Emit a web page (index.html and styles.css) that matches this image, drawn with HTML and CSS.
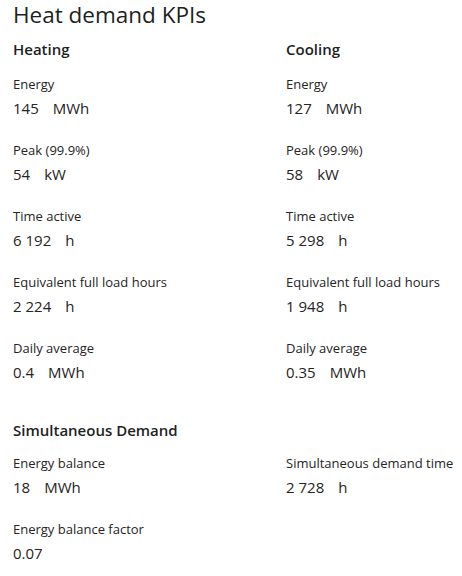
FILE: index.html
```html
<!DOCTYPE html>
<html>
<head>
<meta charset="utf-8">
<link rel="stylesheet" href="styles.css">
</head>
<body>
<div class="page">
  <h1 class="title">Heat demand KPIs</h1>
  <div class="cols">
    <section class="group">
      <h2 class="group-title">Heating</h2>
      <div class="kpi"><div class="label">Energy</div><div class="value"><span class="num">145</span><span class="unit">MWh</span></div></div>
      <div class="kpi"><div class="label">Peak (99.9%)</div><div class="value"><span class="num">54</span><span class="unit">kW</span></div></div>
      <div class="kpi"><div class="label">Time active</div><div class="value"><span class="num">6 192</span><span class="unit">h</span></div></div>
      <div class="kpi"><div class="label">Equivalent full load hours</div><div class="value"><span class="num">2 224</span><span class="unit">h</span></div></div>
      <div class="kpi"><div class="label">Daily average</div><div class="value"><span class="num">0.4</span><span class="unit">MWh</span></div></div>
    </section>
    <section class="group">
      <h2 class="group-title">Cooling</h2>
      <div class="kpi"><div class="label">Energy</div><div class="value"><span class="num">127</span><span class="unit">MWh</span></div></div>
      <div class="kpi"><div class="label">Peak (99.9%)</div><div class="value"><span class="num">58</span><span class="unit">kW</span></div></div>
      <div class="kpi"><div class="label">Time active</div><div class="value"><span class="num">5 298</span><span class="unit">h</span></div></div>
      <div class="kpi"><div class="label">Equivalent full load hours</div><div class="value"><span class="num">1 948</span><span class="unit">h</span></div></div>
      <div class="kpi"><div class="label">Daily average</div><div class="value"><span class="num">0.35</span><span class="unit">MWh</span></div></div>
    </section>
  </div>
  <section class="group sim">
    <h2 class="group-title sim-title">Simultaneous Demand</h2>
    <div class="cols">
      <div class="kpi"><div class="label">Energy balance</div><div class="value"><span class="num">18</span><span class="unit">MWh</span></div></div>
      <div class="kpi"><div class="label">Simultaneous demand time</div><div class="value"><span class="num">2 728</span><span class="unit">h</span></div></div>
      <div class="kpi"><div class="label">Energy balance factor</div><div class="value"><span class="num">0.07</span></div></div>
    </div>
  </section>
</div>
</body>
</html>
```

FILE: styles.css
```css
html, body {
  margin: 0;
  padding: 0;
  background: #ffffff;
}
body {
  font-family: "Open Sans", "Noto Sans", sans-serif;
  color: #252423;
}
.page {
  padding: 0 0 0 13px;
}
.title {
  margin: 0;
  font-size: 22.5px;
  font-weight: 400;
  line-height: 30px;
  color: #201f1e;
}
.cols {
  display: grid;
  grid-template-columns: 273px 1fr;
}
.group-title {
  margin: 8px 0 14px;
  font-size: 15px;
  font-weight: 600;
  line-height: 22px;
  color: #201f1e;
}
.sim-title {
  margin-bottom: 12px;
}
.kpi {
  margin-bottom: 21px;
}
.label {
  font-size: 13px;
  line-height: 20px;
}
.value {
  display: flex;
  margin-top: 3px;
  font-size: 15px;
  line-height: 22px;
}
.num {
  margin-right: 14px;
}
.sim {
  margin-top: 15px;
}
```
